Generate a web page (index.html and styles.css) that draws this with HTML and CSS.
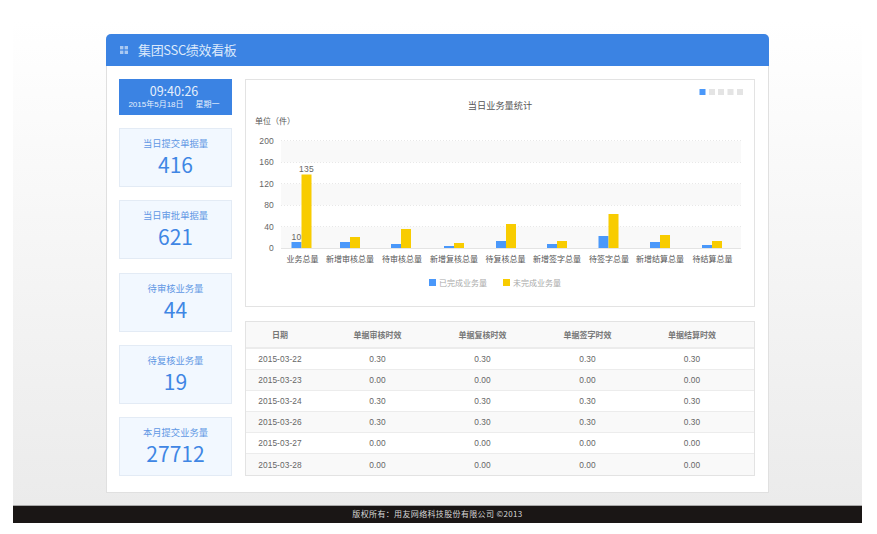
FILE: index.html
```html
<!DOCTYPE html>
<html lang="zh-CN">
<head>
<meta charset="utf-8">
<title>集团SSC绩效看板</title>
<link rel="stylesheet" href="styles.css">
</head>
<body>
<div class="page">
  <main class="stage">
    <section class="card">
      <header class="card-head">
        <svg class="head-icon" width="8" height="8" viewBox="0 0 8 8"><rect width="3.4" height="3.4"/><rect x="4.6" width="3.4" height="3.4"/><rect y="4.6" width="3.4" height="3.4"/><rect x="4.6" y="4.6" width="3.4" height="3.4"/></svg>
        <h1 class="card-title">集团SSC绩效看板</h1>
      </header>
      <div class="card-body">
        <aside class="side">
          <div class="clock">
            <div class="clock-time">09:40:26</div>
            <div class="clock-date"><span>2015年5月18日</span><span>星期一</span></div>
          </div>
          <div class="stat"><div class="stat-label">当日提交单据量</div><div class="stat-value">416</div></div>
          <div class="stat"><div class="stat-label">当日审批单据量</div><div class="stat-value">621</div></div>
          <div class="stat"><div class="stat-label">待审核业务量</div><div class="stat-value">44</div></div>
          <div class="stat"><div class="stat-label">待复核业务量</div><div class="stat-value">19</div></div>
          <div class="stat"><div class="stat-label">本月提交业务量</div><div class="stat-value">27712</div></div>
        </aside>
        <div class="content">
          <div class="chart-panel">
            <svg class="chart" width="508" height="226" viewBox="246 80 508 226">
              <rect class="band" x="281" y="141" width="460" height="21.4"/>
              <rect class="band" x="281" y="183.8" width="460" height="21.4"/>
              <rect class="band" x="281" y="226.6" width="460" height="21.4"/>
              <g class="grid">
                <line x1="281" x2="741" y1="140.5" y2="140.5"/>
                <line x1="281" x2="741" y1="162.5" y2="162.5"/>
                <line x1="281" x2="741" y1="183.5" y2="183.5"/>
                <line x1="281" x2="741" y1="205.5" y2="205.5"/>
                <line x1="281" x2="741" y1="226.5" y2="226.5"/>
              </g>
              <line class="axis" x1="281" x2="741" y1="248.5" y2="248.5"/>
              <g class="bars-a">
                <rect x="291.5" y="242" width="10" height="6"/>
                <rect x="340" y="242" width="10" height="6"/>
                <rect x="391" y="244" width="10" height="4"/>
                <rect x="444" y="246" width="10" height="2"/>
                <rect x="496" y="241" width="10" height="7"/>
                <rect x="547" y="244" width="10" height="4"/>
                <rect x="598.5" y="236" width="10" height="12"/>
                <rect x="650" y="242" width="10" height="6"/>
                <rect x="702" y="245" width="10" height="3"/>
              </g>
              <g class="bars-b">
                <rect x="301.5" y="174.5" width="10" height="73.5"/>
                <rect x="350" y="237" width="10" height="11"/>
                <rect x="401" y="229" width="10" height="19"/>
                <rect x="454" y="243" width="10" height="5"/>
                <rect x="506" y="224" width="10" height="24"/>
                <rect x="557" y="241" width="10" height="7"/>
                <rect x="608.5" y="214" width="10" height="34"/>
                <rect x="660" y="235" width="10" height="13"/>
                <rect x="712" y="241" width="10" height="7"/>
              </g>
              <g class="tick">
                <text x="274" y="144">200</text>
                <text x="274" y="165">160</text>
                <text x="274" y="187">120</text>
                <text x="274" y="208">80</text>
                <text x="274" y="230">40</text>
                <text x="274" y="251">0</text>
              </g>
              <g class="peak">
                <text x="296.5" y="240">10</text>
                <text x="306.5" y="172">135</text>
              </g>
              <g class="cat">
                <text x="302.5" y="262">业务总量</text>
                <text x="350" y="262">新增审核总量</text>
                <text x="402" y="262">待审核总量</text>
                <text x="454" y="262">新增复核总量</text>
                <text x="505.5" y="262">待复核总量</text>
                <text x="557" y="262">新增签字总量</text>
                <text x="609" y="262">待签字总量</text>
                <text x="660" y="262">新增结算总量</text>
                <text x="712.5" y="262">待结算总量</text>
              </g>
              <text class="chart-title" x="500" y="109">当日业务量统计</text>
              <text class="unit" x="255" y="124">单位（件）</text>
              <rect class="key-a" x="429" y="279" width="7" height="7"/>
              <text class="key" x="439" y="286">已完成业务量</text>
              <rect class="key-b" x="503" y="279" width="7" height="7"/>
              <text class="key" x="513" y="286">未完成业务量</text>
              <rect class="key-a" x="699.5" y="89" width="6" height="6"/>
              <rect class="dot" x="709" y="89" width="6" height="6"/>
              <rect class="dot" x="718" y="89" width="6" height="6"/>
              <rect class="dot" x="727.5" y="89" width="6" height="6"/>
              <rect class="dot" x="737" y="89" width="6" height="6"/>
            </svg>
          </div>
          <table class="grid-table">
            <thead>
              <tr><th>日期</th><th>单据审核时效</th><th>单据复核时效</th><th>单据签字时效</th><th>单据结算时效</th></tr>
            </thead>
            <tbody>
              <tr><td>2015-03-22</td><td>0.30</td><td>0.30</td><td>0.30</td><td>0.30</td></tr>
              <tr><td>2015-03-23</td><td>0.00</td><td>0.00</td><td>0.00</td><td>0.00</td></tr>
              <tr><td>2015-03-24</td><td>0.30</td><td>0.30</td><td>0.30</td><td>0.30</td></tr>
              <tr><td>2015-03-26</td><td>0.30</td><td>0.30</td><td>0.30</td><td>0.30</td></tr>
              <tr><td>2015-03-27</td><td>0.00</td><td>0.00</td><td>0.00</td><td>0.00</td></tr>
              <tr><td>2015-03-28</td><td>0.00</td><td>0.00</td><td>0.00</td><td>0.00</td></tr>
            </tbody>
          </table>
        </div>
      </div>
    </section>
  </main>
  <footer class="footer">版权所有：用友网络科技股份有限公司 ©2013</footer>
</div>
</body>
</html>
```
FILE: styles.css
```css
* { box-sizing: border-box; }
html, body { margin: 0; padding: 0; background: #fff; }
body { font-family: "Noto Sans CJK SC", "Liberation Sans", sans-serif; }

.page { width: 849px; margin: 0 auto 0 13px; display: flex; flex-direction: column; height: 523px; }
.stage { flex: 1; padding-top: 34px; background: linear-gradient(#ffffff 0, #ffffff 20px, #ebebeb 100%); }

.card { width: 663px; height: 459px; margin: 0 auto; background: #fff; border: 1px solid #e0e0e0; border-top: 0; border-radius: 5px 5px 0 0; display: flex; flex-direction: column; }
.card-head { height: 32px; margin: 0 -1px; background: #3b83e3; border-radius: 5px 5px 0 0; display: flex; align-items: center; padding-left: 14px; gap: 10px; }
.head-icon { fill: #a9c9f2; flex: none; }
.card-title { margin: 0; font-size: 13px; font-weight: 400; line-height: 20px; letter-spacing: -0.35px; color: #dbe9fb; }

.card-body { flex: 1; display: flex; gap: 13px; padding: 13px 13px 16px 12px; }

.side { width: 113px; display: flex; flex-direction: column; justify-content: space-between; }
.clock { height: 36px; background: #3b83e3; color: #e6f0fc; text-align: center; padding: 3px 3px 0 0; }
.clock-time { font-size: 12.5px; line-height: 17px; }
.clock-date { font-size: 8px; line-height: 11px; display: flex; justify-content: center; gap: 12px; font-family: "Liberation Sans", "Noto Sans CJK SC", sans-serif; }
.stat { height: 59px; background: #f2f8ff; border: 1px solid #e3ebf5; text-align: center; padding-top: 7px; }
.stat-label { font-size: 9.3px; line-height: 14px; color: #5f97e4; }
.stat-value { font-size: 21px; line-height: 26px; color: #3f86e4; margin-top: 1px; }

.content { width: 510px; display: flex; flex-direction: column; justify-content: space-between; }
.chart-panel { height: 228px; border: 1px solid #e3e3e3; background: #fff; }
.chart { display: block; }
.band { fill: #f9f9f9; }
.grid line { stroke: #e8e8e8; stroke-width: 1; stroke-dasharray: 1 2; }
.axis { stroke: #e4e4e4; stroke-width: 1; }
.bars-a rect, .key-a { fill: #4a98fa; }
.bars-b rect, .key-b { fill: #f8cc00; }
.dot { fill: #e4e4e4; }
.tick text { font-family: "Liberation Sans", sans-serif; font-size: 8.5px; fill: #666; text-anchor: end; letter-spacing: 0.2px; }
.peak text { font-family: "Liberation Sans", sans-serif; font-size: 8.5px; fill: #666; text-anchor: middle; letter-spacing: 0.2px; }
.cat text { font-size: 8px; fill: #555; text-anchor: middle; }
.chart-title { font-size: 9.2px; fill: #555; text-anchor: middle; }
.unit { font-size: 8px; fill: #555; }
.key { font-size: 8px; fill: #aaa; }

.grid-table { width: 510px; height: 155px; border-collapse: separate; border-spacing: 0; table-layout: fixed; border: 1px solid #e3e3e3; background: #fff; }
.grid-table th, .grid-table td { padding: 0; text-align: center; color: #666; width: 105px; }
.grid-table th { height: 27px; padding-bottom: 1px; font-size: 8px; font-weight: 700; color: #777; background: #f9f9f9; border-bottom: 2px solid #ececec; }
.grid-table td { height: 21px; font-size: 8.3px; font-family: "Liberation Sans", sans-serif; letter-spacing: 0.1px; border-bottom: 1px solid #ececec; }
.grid-table tbody tr:last-child td { border-bottom: 0; }
.grid-table th:first-child, .grid-table td:first-child { width: 79px; padding-right: 11px; }
.grid-table th:last-child, .grid-table td:last-child { width: 114px; padding-right: 10px; }
.grid-table tbody tr:nth-child(even) td { background: #f9f9f9; }

.footer { height: 18px; flex: none; background: #1a1615; border-top: 1px solid #a8a8a8; color: #d8d8d8; font-size: 8px; line-height: 16px; text-align: center; letter-spacing: 0.35px; }
```
